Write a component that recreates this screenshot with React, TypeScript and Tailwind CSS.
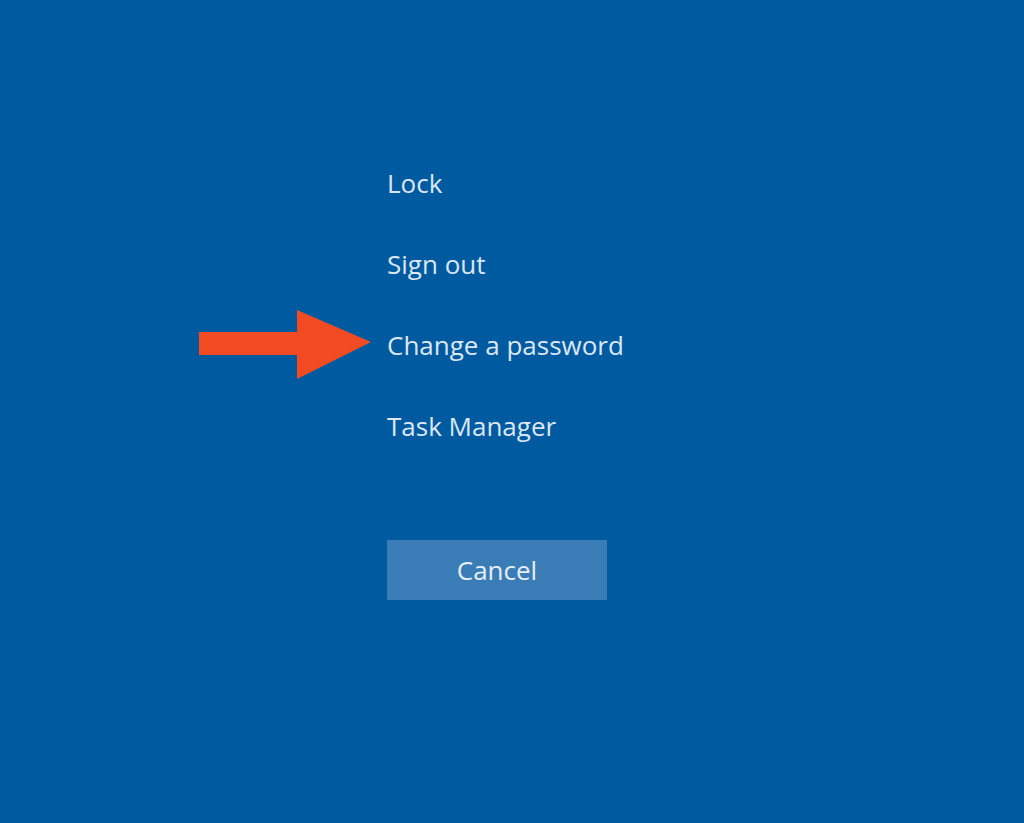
import React from 'react';

const items = ['Lock', 'Sign out', 'Change a password', 'Task Manager'];

const Arrow: React.FC = () => (
  <svg
    className="absolute left-[-188px] top-1/2 -translate-y-1/2"
    width="172"
    height="70"
    viewBox="0 0 172 70"
  >
    <path d="M0 22 L98 22 L98 0 L172 32 L98 69 L98 45 L0 45 Z" fill="#f24a22" />
  </svg>
);

export default function App() {
  return (
    <div className="w-[1024px] h-[823px] bg-[#005aa0] overflow-hidden font-['Open_Sans','Noto_Sans',sans-serif] text-[#dbe7f3]">
      <div className="pl-[387px] pt-[142px] flex flex-col">
        {items.map((label) => (
          <div key={label} className="relative h-[81px] flex items-center">
            {label === 'Change a password' && <Arrow />}
            <span className="text-[26px] leading-none">{label}</span>
          </div>
        ))}
        <button className="mt-[74px] w-[220px] h-[60px] bg-[#3a7cb5] text-[26px] text-[#e6eef6] flex items-center justify-center">
          Cancel
        </button>
      </div>
    </div>
  );
}
